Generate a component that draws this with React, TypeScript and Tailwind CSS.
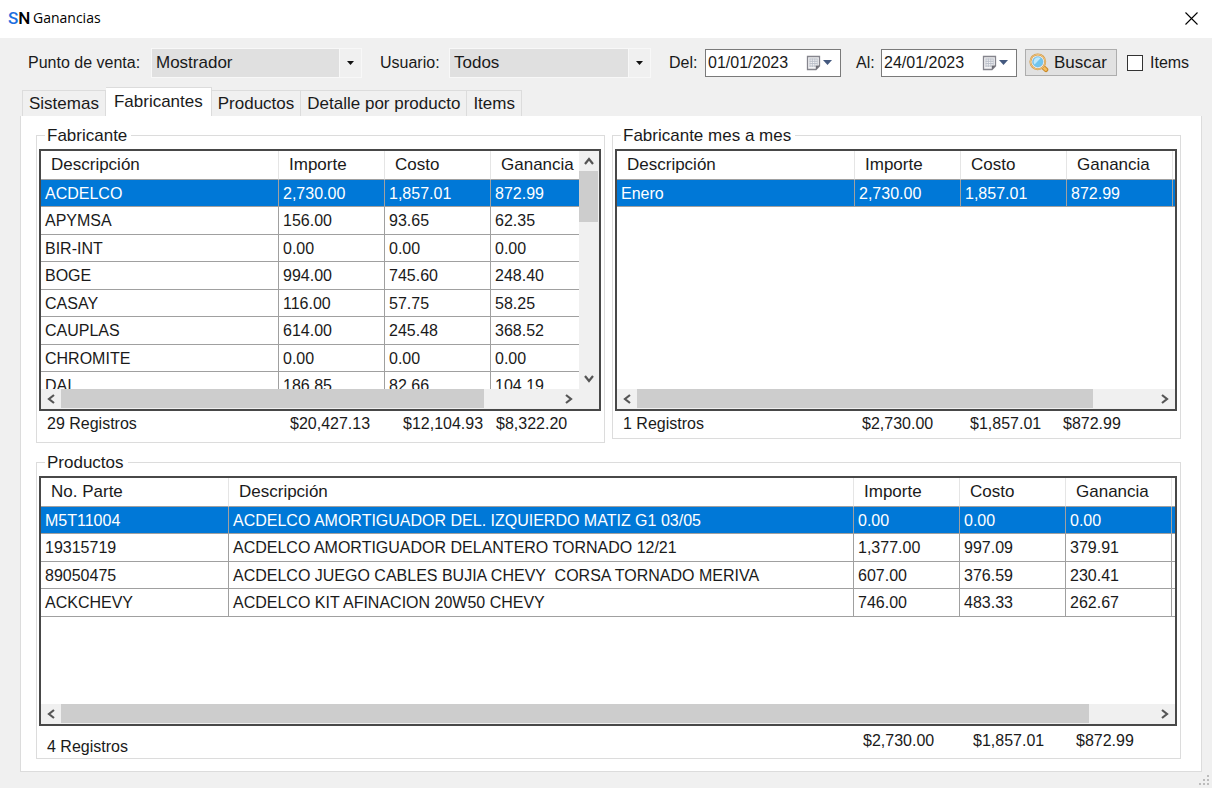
import { useState } from 'react'
import type { ReactNode } from 'react'
import clsx from 'clsx'

type Column = { label: string; width?: string }

const tabs = ['Sistemas', 'Fabricantes', 'Productos', 'Detalle por producto', 'Items']

const brandColumns: Column[] = [
  { label: 'Descripción', width: 'w-[238px]' },
  { label: 'Importe', width: 'w-[106px]' },
  { label: 'Costo', width: 'w-[106px]' },
  { label: 'Ganancia', width: 'w-[106px]' },
]

const productColumns: Column[] = [
  { label: 'No. Parte', width: 'w-[188px]' },
  { label: 'Descripción' },
  { label: 'Importe', width: 'w-[106px]' },
  { label: 'Costo', width: 'w-[106px]' },
  { label: 'Ganancia', width: 'w-[106px]' },
]

const brands = [
  ['ACDELCO', '2,730.00', '1,857.01', '872.99'],
  ['APYMSA', '156.00', '93.65', '62.35'],
  ['BIR-INT', '0.00', '0.00', '0.00'],
  ['BOGE', '994.00', '745.60', '248.40'],
  ['CASAY', '116.00', '57.75', '58.25'],
  ['CAUPLAS', '614.00', '245.48', '368.52'],
  ['CHROMITE', '0.00', '0.00', '0.00'],
  ['DAI', '186.85', '82.66', '104.19'],
]

const months = [['Enero', '2,730.00', '1,857.01', '872.99']]

const products = [
  ['M5T11004', 'ACDELCO AMORTIGUADOR DEL. IZQUIERDO MATIZ G1 03/05', '0.00', '0.00', '0.00'],
  ['19315719', 'ACDELCO AMORTIGUADOR DELANTERO TORNADO 12/21', '1,377.00', '997.09', '379.91'],
  ['89050475', 'ACDELCO JUEGO CABLES BUJIA CHEVY  CORSA TORNADO MERIVA', '607.00', '376.59', '230.41'],
  ['ACKCHEVY', 'ACDELCO KIT AFINACION 20W50 CHEVY', '746.00', '483.33', '262.67'],
]

const chevrons = {
  left: 'M8 1 L3 5 L8 9',
  right: 'M2 1 L7 5 L2 9',
  up: 'M1 8 L5 3 L9 8',
  down: 'M1 2 L5 7 L9 2',
}

function ScrollButton({ dir, label }: { dir: keyof typeof chevrons; label: string }) {
  return (
    <button type="button" aria-label={label} className="flex size-5 shrink-0 items-center justify-center">
      <svg width="10" height="10" viewBox="0 0 10 10" fill="none" stroke="#555" strokeWidth="2.2">
        <path d={chevrons[dir]} />
      </svg>
    </button>
  )
}

function HScroll({ size }: { size: number }) {
  return (
    <div className="flex h-5 shrink-0 bg-[#f0f0f0]">
      <ScrollButton dir="left" label="Desplazar a la izquierda" />
      <div className="min-w-0 flex-1">
        <div className="h-[19px] bg-[#cdcdcd]" style={{ width: `${size}%` }} />
      </div>
      <ScrollButton dir="right" label="Desplazar a la derecha" />
    </div>
  )
}

function VScroll({ size }: { size: number }) {
  return (
    <div className="flex w-5 shrink-0 flex-col bg-[#f0f0f0]">
      <ScrollButton dir="up" label="Desplazar arriba" />
      <div className="min-h-0 flex-1">
        <div className="w-[19px] bg-[#cdcdcd]" style={{ height: `${size}%` }} />
      </div>
      <ScrollButton dir="down" label="Desplazar abajo" />
    </div>
  )
}

type DataGridProps = {
  columns: Column[]
  rows: string[][]
  hSize: number
  vSize?: number
  stretch?: boolean
  className?: string
}

function DataGrid({ columns, rows, hSize, vSize, stretch, className }: DataGridProps) {
  const [selected, setSelected] = useState(0)

  return (
    <div className={clsx('flex border-2 border-[#484848] bg-white', className)}>
      <div className="flex min-w-0 flex-1 flex-col">
        <div className="min-h-0 flex-1 overflow-hidden">
          <table className={clsx('table-fixed border-separate border-spacing-0', stretch ? 'w-full' : 'w-[559px]')}>
            <thead>
              <tr className="h-[29px]">
                {columns.map((col) => (
                  <th
                    key={col.label}
                    className={clsx(
                      'border-r border-b border-r-[#e5e5e5] border-b-[#a0a0a0] pl-2.5 text-left text-[17px] leading-5 font-normal',
                      col.width,
                    )}
                  >
                    {col.label}
                  </th>
                ))}
                <th className={clsx('border-b border-[#a0a0a0]', stretch ? 'w-[3px]' : 'w-[3px]')} />
              </tr>
            </thead>
            <tbody>
              {rows.map((row, i) => (
                <tr
                  key={row[0]}
                  onClick={() => setSelected(i)}
                  className={clsx('odd:h-[27px] even:h-7', i === selected && 'bg-[#0078d7] text-white')}
                >
                  {row.map((cell, c) => (
                    <td
                      key={c}
                      className="overflow-hidden border-r border-b border-[#a0a0a0] pt-px pl-1 text-base leading-5 whitespace-pre"
                    >
                      {cell}
                    </td>
                  ))}
                  <td className="border-b border-[#a0a0a0]" />
                </tr>
              ))}
            </tbody>
          </table>
        </div>
        <HScroll size={hSize} />
      </div>
      {vSize !== undefined && (
        <div className="flex bg-[#f0f0f0] pb-5">
          <VScroll size={vSize} />
        </div>
      )}
    </div>
  )
}

function GroupBox({ title, className, children }: { title: string; className?: string; children: ReactNode }) {
  return (
    <fieldset className={clsx('flex min-w-0 flex-col border border-[#dcdcdc] pr-[3px] pl-0.5', className)}>
      <legend className="ml-1.5 pt-0.5 pr-1 pl-0.5 text-[17px] leading-5">{title}</legend>
      {children}
    </fieldset>
  )
}

function Combo({ id, value, className }: { id: string; value: string; className: string }) {
  return (
    <div className={clsx('relative flex h-[30px] border border-[#f8f8f8] bg-[#e0e0e0]', className)}>
      <select id={id} className="w-full appearance-none pr-6 pl-1 text-[17px] leading-5 outline-none">
        <option>{value}</option>
      </select>
      <span className="pointer-events-none absolute inset-y-0 right-0 flex w-[22px] items-center justify-center border-l border-[#f8f8f8] bg-[#f0f0f0]">
        <svg width="7" height="4" viewBox="0 0 7 4">
          <path d="M0 0 H7 L3.5 4 Z" fill="#111" />
        </svg>
      </span>
    </div>
  )
}

function DateBox({ id, value }: { id: string; value: string }) {
  return (
    <div className="flex h-7 w-[136px] items-center border border-[#7a7a7a] bg-white">
      <input id={id} defaultValue={value} className="w-[100px] pl-0.5 text-base leading-5 outline-none" />
      <button type="button" aria-label="Abrir calendario" className="flex items-center gap-0.5">
        <svg width="15" height="16" viewBox="0 0 15 16">
          <path d="M1.5 1.5 H13.5 V11 L10 14.5 H1.5 Z" fill="#f4f4f6" stroke="#85858d" strokeWidth="1.3" />
          <path d="M3.5 4 H11.5 M3.5 6.3 H11.5 M3.5 8.6 H11.5 M3.5 11 H10" stroke="#aab0bb" strokeWidth="0.8" />
          <path d="M4 3.5 V12 M6.4 3.5 V12 M8.8 3.5 V12 M11.2 3.5 V10" stroke="#b9bec8" strokeWidth="0.8" />
          <path d="M13.8 10.5 L9.8 14.8 V10.5 Z" fill="#6d6d75" />
        </svg>
        <svg width="9" height="5" viewBox="0 0 9 5">
          <path d="M0 0 H9 L4.5 5 Z" fill="#44597f" />
        </svg>
      </button>
    </div>
  )
}

function SearchIcon() {
  return (
    <svg width="20" height="20" viewBox="0 0 20 20">
      <path d="M14 14 L17 16.8" stroke="#c98a2b" strokeWidth="4.6" strokeLinecap="round" />
      <path d="M14 14 L16.9 16.7" stroke="#f5bd5c" strokeWidth="2.6" strokeLinecap="round" />
      <circle cx="8.8" cy="8.8" r="7.4" fill="#fff" stroke="#d39a45" strokeWidth="2" />
      <circle cx="8.8" cy="8.8" r="7.4" fill="none" stroke="#f3cf92" strokeWidth="0.8" />
      <circle cx="8.8" cy="8.8" r="5.4" fill="#6fc5ee" stroke="#8fb4cc" strokeWidth="0.6" />
      <path d="M4.6 8.5 A4.4 4.4 0 0 1 11.5 5.2 L5.6 11.6 A4.4 4.4 0 0 1 4.6 8.5 Z" fill="#bfe8fb" />
    </svg>
  )
}

export default function App() {
  const [tab, setTab] = useState('Fabricantes')

  return (
    <div className="flex min-h-screen flex-col bg-[#f0f0f0] font-['Liberation_Sans',Arial,sans-serif] text-base text-[#1a1a1a]">
      <header className="flex h-[38px] items-center justify-between bg-white pr-3 pb-0.5 pl-2">
        <div className="flex items-center gap-1">
          <span className="w-[21px] font-['Roboto',sans-serif] text-[17px] leading-5 font-medium text-black">
            <span className="text-[#1d6fe0]">S</span>N
          </span>
          <h1 className="font-['Open_Sans',sans-serif] text-sm leading-5 text-black">Ganancias</h1>
        </div>
        <button type="button" aria-label="Cerrar" className="p-0.5">
          <svg width="13" height="13" viewBox="0 0 13 13" stroke="#000" strokeWidth="1.1">
            <path d="M0.5 0.5 L12.5 12.5 M12.5 0.5 L0.5 12.5" />
          </svg>
        </button>
      </header>

      <div className="flex h-[49px] items-center pl-7">
        <label htmlFor="punto" className="w-[123px] whitespace-nowrap">Punto de venta:</label>
        <Combo id="punto" value="Mostrador" className="w-[211px]" />
        <label htmlFor="usuario" className="ml-[18px] w-[69px]">Usuario:</label>
        <Combo id="usuario" value="Todos" className="w-[202px]" />
        <label htmlFor="del" className="ml-[18px] w-9">Del:</label>
        <DateBox id="del" value="01/01/2023" />
        <label htmlFor="al" className="ml-[15px] w-[25px]">Al:</label>
        <DateBox id="al" value="24/01/2023" />
        <button
          type="button"
          className="ml-2 flex h-[27px] w-[92px] items-center gap-[5px] border border-[#adadad] bg-[#e1e1e1] pl-[3px] text-[17px] leading-5"
        >
          <SearchIcon />
          Buscar
        </button>
        <label className="ml-2.5 flex items-center gap-[7px] whitespace-nowrap">
          <input type="checkbox" className="size-4 appearance-none border border-[#333] bg-white checked:bg-[#0078d7]" />
          Items
        </label>
      </div>

      <nav role="tablist" className="flex h-[29px] items-end pl-[22px] text-[17px] leading-5">
        {tabs.map((name) => (
          <button
            key={name}
            type="button"
            role="tab"
            aria-selected={name === tab}
            onClick={() => setTab(name)}
            className={clsx(
              'whitespace-nowrap border-t border-r border-[#dcdcdc] first:border-l',
              name === tab ? 'h-[29px] bg-white px-2 pb-px' : 'h-[26px] px-1.5',
            )}
          >
            {name}
          </button>
        ))}
      </nav>

      <main className="mr-2.5 mb-4 ml-5 flex flex-1 flex-col border border-t-0 border-[#dcdcdc] bg-white pt-2 pr-5 pb-3 pl-[15px]">
        <div className="grid grid-cols-2 items-start gap-[7px]">
          <GroupBox title="Fabricante">
            <DataGrid columns={brandColumns} rows={brands} hSize={85} vSize={26} className="mt-[3px] h-[262px]" />
            <div className="grid h-[31px] grid-cols-[243px_113px_93px_auto] pt-[3px] pl-2 leading-5">
              <span>29 Registros</span>
              <span>$20,427.13</span>
              <span>$12,104.93</span>
              <span>$8,322.20</span>
            </div>
          </GroupBox>
          <GroupBox title="Fabricante mes a mes">
            <DataGrid columns={brandColumns} rows={months} hSize={88} className="mt-[3px] h-[262px]" />
            <div className="grid h-[27px] grid-cols-[1fr_108px_93px_114px] pt-[3px] pl-2 leading-5">
              <span>1 Registros</span>
              <span>$2,730.00</span>
              <span>$1,857.01</span>
              <span>$872.99</span>
            </div>
          </GroupBox>
        </div>

        <GroupBox title="Productos" className="mt-2 flex-1">
          <DataGrid columns={productColumns} rows={products} hSize={94} stretch className="mt-[3px] min-h-[250px] flex-1" />
          <div className="grid h-[31px] grid-cols-[1fr_110px_103px_101px] pt-[5px] pl-2 leading-5">
            <span className="pt-1.5">4 Registros</span>
            <span>$2,730.00</span>
            <span>$1,857.01</span>
            <span>$872.99</span>
          </div>
        </GroupBox>
      </main>

      <svg className="absolute right-0.5 bottom-0.5" width="11" height="11" viewBox="0 0 11 11" fill="#bcbcbc">
        <path d="M8 0h2v2h-2z M8 4h2v2h-2z M4 4h2v2h-2z M8 8h2v2h-2z M4 8h2v2h-2z M0 8h2v2h-2z" />
      </svg>
    </div>
  )
}
